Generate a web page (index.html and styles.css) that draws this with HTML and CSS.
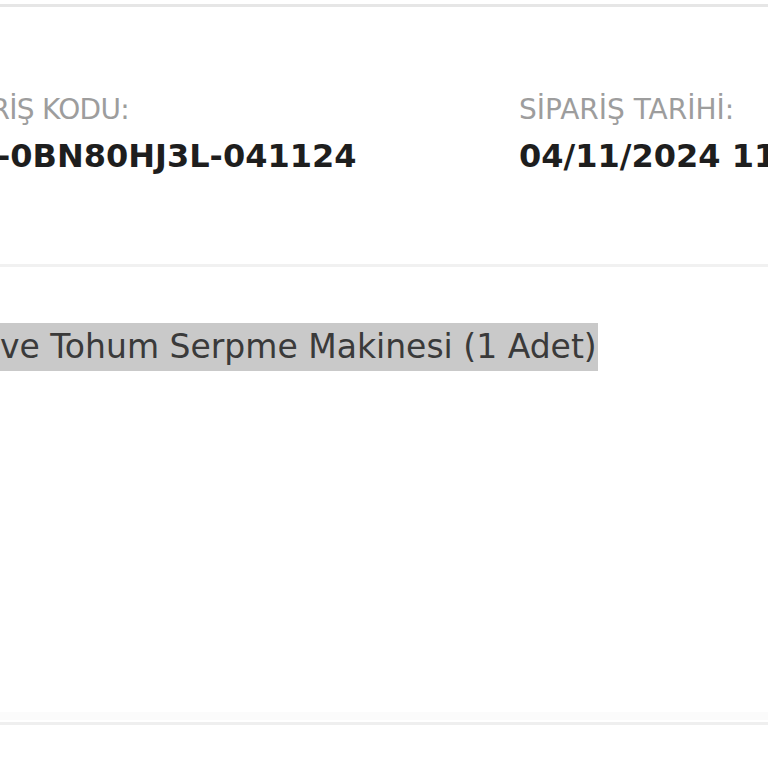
FILE: index.html
```html
<!DOCTYPE html>
<html lang="tr">
<head>
<meta charset="utf-8">
<link rel="stylesheet" href="styles.css">
</head>
<body>
<div class="card">
  <div class="topline"></div>
  <div class="info">
    <div class="col col-code">
      <div class="label label-code">SİPARİŞ KODU:</div>
      <div class="value value-code">-0BN80HJ3L-041124</div>
    </div>
    <div class="col col-date">
      <div class="label">SİPARİŞ TARİHİ:</div>
      <div class="value">04/11/2024 11:32</div>
    </div>
  </div>
  <div class="divider"></div>
  <div class="product">
    <span class="product-name">ve Tohum Serpme Makinesi (1 Adet)</span>
  </div>
  <div class="footer-band"></div>
  <div class="footer-line"></div>
</div>
</body>
</html>
```
FILE: styles.css
```css
html, body {
  margin: 0;
  padding: 0;
  background: #ffffff;
  overflow: hidden;
}
.card {
  width: 768px;
  height: 768px;
  font-family: "DejaVu Sans", "Noto Sans", sans-serif;
  overflow: hidden;
}
.topline {
  margin-top: 4px;
  height: 3px;
  background: #e6e6e6;
}
.info {
  display: flex;
  padding-top: 85px;
  height: 173px;
  box-sizing: border-box;
}
.col {
  display: flex;
  flex-direction: column;
  white-space: nowrap;
}
.col-code {
  width: 519px;
  flex: none;
}
.label {
  font-size: 28px;
  line-height: 36px;
  color: #9d9d9d;
  font-weight: 400;
}
.label-code {
  margin-left: -67px;
  letter-spacing: -0.7px;
}
.value {
  margin-top: 8px;
  font-size: 32px;
  line-height: 40px;
  color: #1e1e1e;
  font-weight: 700;
}
.value-code {
  margin-left: -3px;
}
.divider {
  margin-top: 84px;
  height: 3px;
  background: #f1f1f1;
}
.product {
  padding-top: 56px;
  height: 445px;
  box-sizing: border-box;
}
.product-name {
  display: inline-block;
  background: #c9c9c9;
  color: #3a3a3a;
  font-size: 33px;
  line-height: 48px;
  padding: 0 1px 0 0;
}
.footer-band {
  height: 8px;
  background: #fbfbfb;
}
.footer-line {
  margin-top: 2px;
  height: 3px;
  background: #efefef;
}
```
